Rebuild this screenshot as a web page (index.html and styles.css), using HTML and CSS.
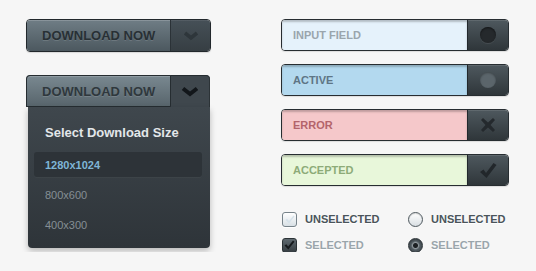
FILE: index.html
```html
<!DOCTYPE html>
<html>
<head>
<meta charset="utf-8">
<link rel="stylesheet" href="styles.css">
</head>
<body>
<div class="page">
  <div class="col-left">
    <div class="btn">
      <span class="btn-main">DOWNLOAD NOW</span>
      <span class="btn-arrow">
        <svg width="16" height="10" viewBox="0 0 16 10"><polyline points="2,2 8,7 14,2" fill="none" stroke="#2e363b" stroke-width="3.6" stroke-linejoin="miter"/></svg>
      </span>
    </div>
    <div class="dropdown">
      <div class="btn btn-open">
        <span class="btn-main">DOWNLOAD NOW</span>
        <span class="btn-arrow">
          <svg width="18" height="11" viewBox="0 0 18 11"><polyline points="2,2.5 9,8 16,2.5" fill="none" stroke="#12161a" stroke-width="4" stroke-linejoin="miter"/></svg>
        </span>
      </div>
      <div class="menu">
        <div class="menu-title">Select Download Size</div>
        <div class="menu-item active">1280x1024</div>
        <div class="menu-item">800x600</div>
        <div class="menu-item">400x300</div>
      </div>
    </div>
  </div>
  <div class="col-right">
    <div class="field f-default">
      <span class="field-label">INPUT FIELD</span>
      <span class="field-btn"><span class="dot"></span></span>
    </div>
    <div class="field f-active">
      <span class="field-label">ACTIVE</span>
      <span class="field-btn"><span class="dot dot-light"></span></span>
    </div>
    <div class="field f-error">
      <span class="field-label">ERROR</span>
      <span class="field-btn">
        <svg width="16" height="16" viewBox="0 0 16 16"><path d="M3 1 L8 5.5 L13 1 L15 3 L10.5 8 L15 13 L13 15 L8 10.5 L3 15 L1 13 L5.5 8 L1 3 Z" fill="#24292d"/></svg>
      </span>
    </div>
    <div class="field f-ok">
      <span class="field-label">ACCEPTED</span>
      <span class="field-btn">
        <svg width="18" height="17" viewBox="0 0 18 17"><path d="M1 10 L4.5 7.5 L7 11 L14.5 1 L17.5 3 L7.5 16 Z" fill="#22272b"/></svg>
      </span>
    </div>
    <div class="options">
      <label class="opt"><span class="check"><svg width="10" height="9" viewBox="0 0 10 9"><path d="M0.5 5 L2 3.8 L4 6 L8.5 0.5 L9.5 1.5 L4 8.5 Z" fill="#d6e2ea"/></svg></span><span class="opt-text">UNSELECTED</span></label>
      <label class="opt"><span class="radio"></span><span class="opt-text">UNSELECTED</span></label>
      <label class="opt"><span class="check check-on"><svg width="11" height="10" viewBox="0 0 11 10"><path d="M0.5 5.5 L2.3 4.2 L4.2 6.5 L9 0.5 L10.5 1.7 L4.3 9.5 Z" fill="#161a1d"/></svg></span><span class="opt-text light">SELECTED</span></label>
      <label class="opt"><span class="radio radio-on"></span><span class="opt-text light">SELECTED</span></label>
    </div>
  </div>
</div>
</body>
</html>
```
FILE: styles.css
```css
* { box-sizing: border-box; }
html, body {
  margin: 0;
  padding: 0;
  background: #f6f6f6;
  font-family: "Liberation Sans", Arial, sans-serif;
}
.page {
  display: flex;
  gap: 70px;
  padding: 19px 0 0 26px;
}
.col-left {
  width: 185px;
  display: flex;
  flex-direction: column;
  gap: 23px;
}
.btn {
  display: flex;
  height: 33px;
  border: 1px solid #22282c;
  border-radius: 4px;
  overflow: hidden;
  box-shadow: 0 1px 1px rgba(0,0,0,0.12);
}
.btn-main {
  flex: 1;
  display: flex;
  align-items: center;
  padding-left: 15px;
  font-size: 13px;
  font-weight: bold;
  color: #283035;
  background: linear-gradient(#6f7d85, #4c585f);
  box-shadow: inset 0 1px 0 rgba(255,255,255,0.18);
  text-shadow: 0 1px 0 rgba(255,255,255,0.12);
}
.btn-arrow {
  width: 40px;
  display: flex;
  align-items: center;
  justify-content: center;
  background: linear-gradient(#465057, #363e43);
  border-left: 1px solid #2b3237;
  box-shadow: inset 0 1px 0 rgba(255,255,255,0.08);
}
.dropdown {
  display: flex;
  flex-direction: column;
  width: 184px;
}
.btn-open {
  height: 32px;
  border: none;
  border-radius: 4px 4px 0 0;
  background: #3f474d;
  box-shadow: none;
}
.btn-open .btn-main {
  border: 1px solid #262d31;
  border-radius: 4px 0 0 0;
  color: #2f383d;
  background: linear-gradient(#798890, #58656c);
}
.btn-open .btn-arrow {
  width: 39px;
  border-left: none;
  background: #3f474d;
  box-shadow: none;
  border-top: 1px solid #262d31;
  border-right: 1px solid #2c3337;
  border-radius: 0 4px 0 0;
}
.menu {
  margin-left: 2px;
  height: 141px;
  background: linear-gradient(#3f474d, #2e3439);
  border-radius: 0 0 4px 4px;
  box-shadow: 0 3px 6px rgba(0,0,0,0.25);
  padding: 18px 8px 0 6px;
  display: flex;
  flex-direction: column;
}
.menu-title {
  padding-left: 11px;
  font-size: 13px;
  font-weight: bold;
  line-height: 16px;
  color: #e3e7e9;
  margin-bottom: 11px;
}
.menu-item {
  height: 25px;
  margin-bottom: 5px;
  display: flex;
  align-items: center;
  padding-left: 11px;
  font-size: 11px;
  color: #858f95;
  border-radius: 3px;
}
.menu-item.active {
  background: #2d3338;
  font-weight: bold;
  color: #7fb6d6;
  box-shadow: 0 1px 0 rgba(255,255,255,0.03);
}
.col-right {
  width: 228px;
  display: flex;
  flex-direction: column;
  gap: 13px;
}
.field {
  display: flex;
  height: 32px;
  border: 1px solid #272d31;
  border-radius: 4px;
  overflow: hidden;
  box-shadow: 0 1px 1px rgba(0,0,0,0.1);
}
.field-label {
  flex: 1;
  display: flex;
  align-items: center;
  padding-left: 11px;
  font-size: 11px;
  font-weight: bold;
  box-shadow: inset 0 2px 2px rgba(0,0,0,0.22);
}
.field-btn {
  width: 41px;
  display: flex;
  align-items: center;
  justify-content: center;
  background: linear-gradient(#4e585e, #2f363a);
  border-left: 1px solid #22282c;
  box-shadow: inset 0 1px 0 rgba(255,255,255,0.1);
}
.f-default .field-label { background: #e5f2fb; color: #9aa5ac; }
.f-active .field-label { background: #b3d9ef; color: #5e7585; }
.f-error .field-label { background: #f5c8ca; color: #b3646b; }
.f-ok .field-label { background: #e8f7da; color: #8dab78; }
.dot {
  width: 16px;
  height: 16px;
  border-radius: 50%;
  background: #25292c;
  box-shadow: inset 0 1px 2px rgba(0,0,0,0.5), 0 1px 0 rgba(255,255,255,0.08);
}
.dot-light {
  background: #5b656b;
  box-shadow: inset 0 1px 2px rgba(0,0,0,0.3);
}
.options {
  margin-top: 13px;
  display: grid;
  grid-template-columns: 126px auto;
  row-gap: 12px;
  padding-left: 1px;
}
.opt {
  display: flex;
  align-items: center;
  height: 14px;
}
.opt-text {
  font-size: 11px;
  font-weight: bold;
  color: #4a545a;
  text-shadow: 0 1px 0 #fff;
  margin-left: 8px;
}
.opt-text.light { color: #9aa5ab; }
.check {
  width: 15px;
  height: 15px;
  border-radius: 3px;
  border: 1px solid #77838a;
  background: linear-gradient(#ffffff, #d8e0e5);
  display: flex;
  align-items: center;
  justify-content: center;
  box-shadow: 0 1px 0 #fff;
}
.check-on {
  border-color: #2b3236;
  background: linear-gradient(#5f6a70, #353c41);
}
.radio {
  width: 15px;
  height: 15px;
  border-radius: 50%;
  border: 1px solid #4e585e;
  background: linear-gradient(#ffffff, #d9dfe3);
  box-shadow: inset 0 1px 1px rgba(0,0,0,0.15);
}
.radio-on {
  border-color: #2b3236;
  background: radial-gradient(circle, #1c2023 0, #1c2023 2px, #8e979c 3px, #4f595f 4.5px, #3a4247 100%);
}
```
